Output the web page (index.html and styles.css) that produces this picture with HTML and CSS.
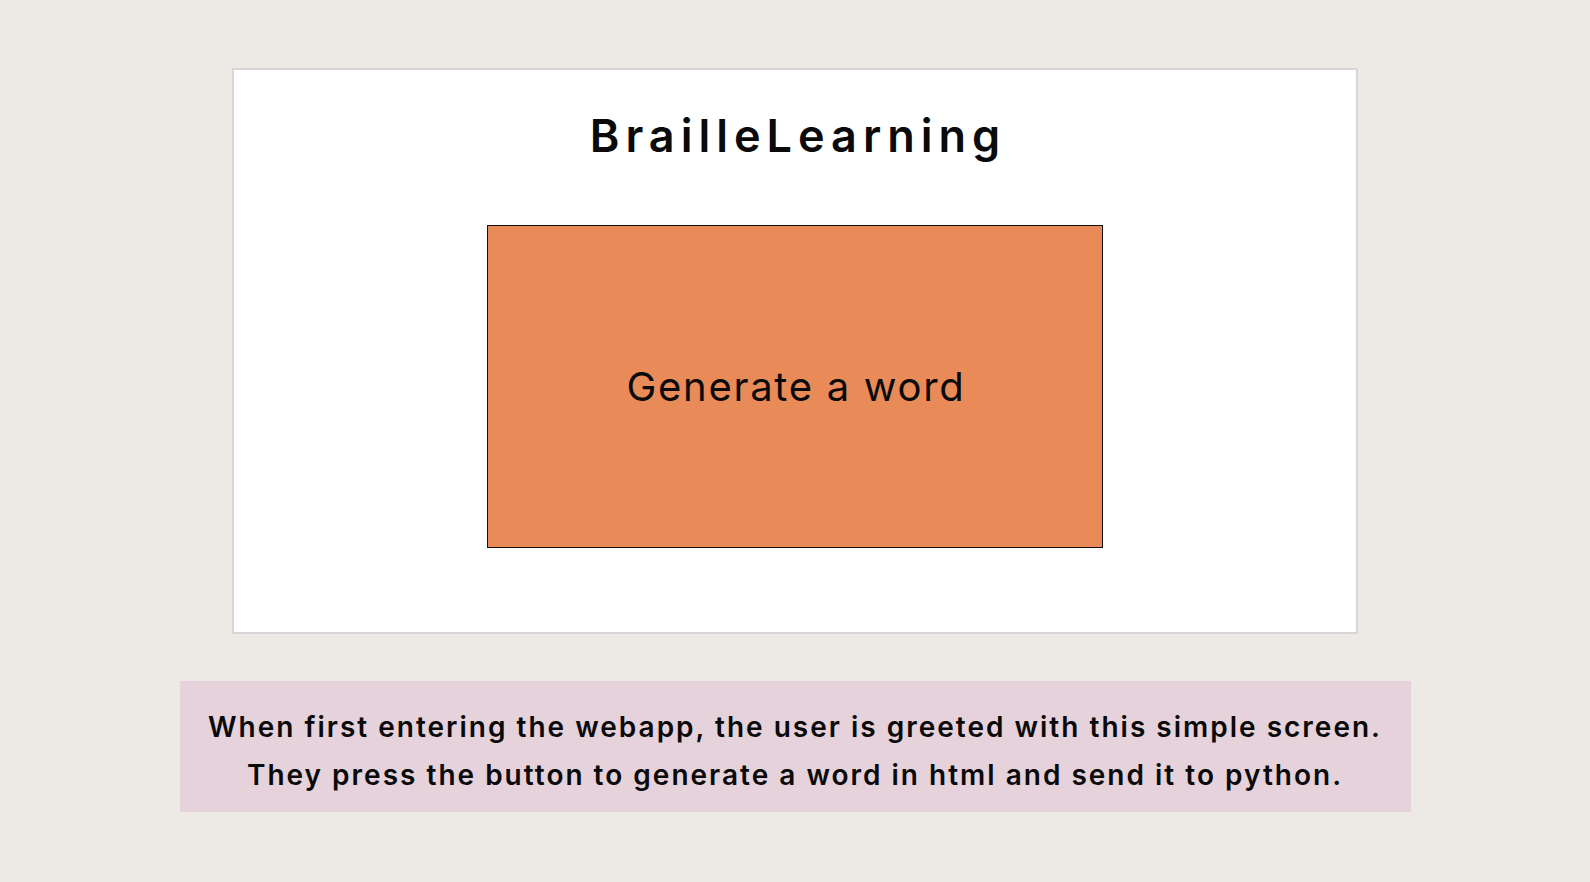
FILE: index.html
```html
<!DOCTYPE html>
<html lang="en">
<head>
<meta charset="utf-8">
<title>BrailleLearning</title>
<link rel="stylesheet" href="styles.css">
</head>
<body>
<main class="page">
  <section class="card">
    <h1 class="title">BrailleLearning</h1>
    <div class="generate">Generate a word</div>
  </section>
  <p class="caption">When first entering the webapp, the user is greeted with this simple screen.<br>They press the button to generate a word in html and send it to python.</p>
</main>
</body>
</html>
```

FILE: styles.css
```css
html, body {
  margin: 0;
  padding: 0;
}
body {
  background: #edeae5;
  width: 1590px;
  height: 882px;
  overflow: hidden;
  font-family: "Inter", "Liberation Sans", sans-serif;
  color: #0a0a0a;
}
.page {
  display: flex;
  flex-direction: column;
  align-items: center;
  padding-top: 68px;
}
.card {
  box-sizing: border-box;
  width: 1126px;
  height: 566px;
  background: #ffffff;
  border: 2px solid #d6d6d6;
  display: flex;
  flex-direction: column;
  align-items: center;
}
.title {
  margin: 41px 0 0 0;
  padding-left: 6px;
  font-size: 45px;
  line-height: 50px;
  font-weight: 600;
  letter-spacing: 6px;
}
.generate {
  box-sizing: border-box;
  margin-top: 64px;
  width: 616px;
  height: 323px;
  background: #e98a59;
  border: 1px solid #111;
  display: flex;
  align-items: center;
  justify-content: center;
  padding-left: 2px;
  font-size: 40px;
  font-weight: 400;
  letter-spacing: 1.7px;
}
.caption {
  box-sizing: border-box;
  margin: 47px 0 0 0;
  width: 1231px;
  height: 131px;
  background: #e5d2da;
  padding-top: 22px;
  text-align: center;
  font-size: 28px;
  line-height: 48px;
  font-weight: 600;
  letter-spacing: 2px;
}
```
